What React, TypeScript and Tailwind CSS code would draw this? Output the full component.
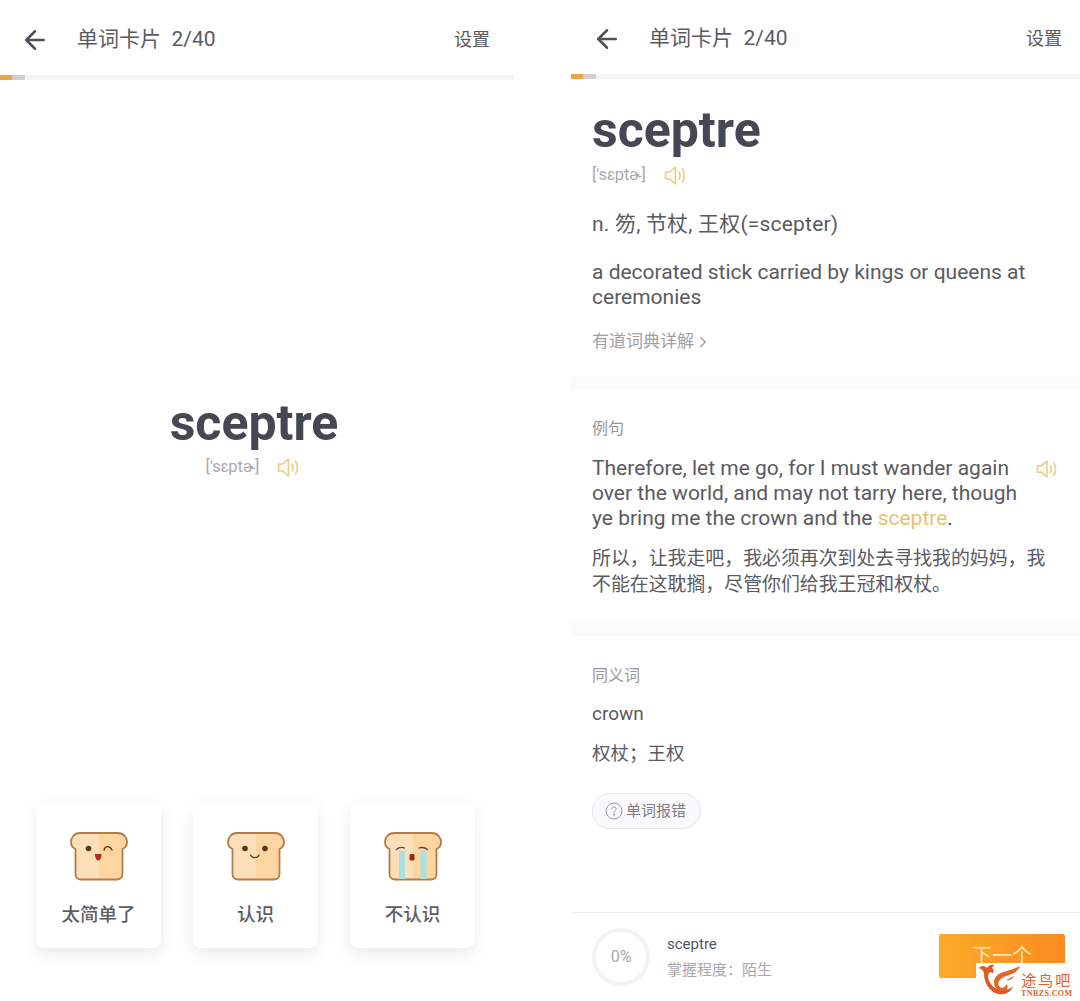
import { ArrowLeft, ChevronRight } from "lucide-react";

const font = "font-['Roboto','Noto_Sans_CJK_SC',sans-serif]";

function Speaker({ className = "" }: { className?: string }) {
  return (
    <svg viewBox="0 0 24 20" fill="none" className={className} stroke="#e9cd8c" strokeWidth="1.600" strokeLinejoin="round" strokeLinecap="round">
      <path d="M1.500 6.500H5.500L11.500 1.500V18.500L5.500 13.500H1.500Z" fill="#fdf9ee" />
      <path d="M15 6.500C16.200 8.500 16.200 11.500 15 13.500" />
      <path d="M18.500 3.500C21 7 21 13 18.500 16.500" />
    </svg>
  );
}

function Bread({ face }: { face: "wink" | "smile" | "cry" }) {
  return (
    <svg viewBox="0 0 58 49" className="h-[49px] w-[58px]" fill="none">
      <defs>
        <linearGradient id={`crust-${face}`} x1="0" x2="1" y1="0" y2="0">
          <stop offset="0.5" stopColor="#fbdfb8" />
          <stop offset="0.5" stopColor="#fcd5a0" />
        </linearGradient>
      </defs>
      <path
        d="M10 1H48C54 1 57 6 57 10C57 14 55 16 52.500 17V42C52.500 45.500 50 47.500 47 47.500H11C8 47.500 5.500 45.500 5.500 42V17C3 16 1 14 1 10C1 6 4 1 10 1Z"
        fill={`url(#crust-${face})`}
        stroke="#b57b48"
        strokeWidth="1.800"
      />
      {face === "wink" && (
        <>
          <circle cx="18.500" cy="16.500" r="2.800" fill="#5b3418" />
          <path d="M34 18C35 13.500 40 13.500 42 18" stroke="#5b3418" strokeWidth="1.300" strokeLinecap="round" />
          <path d="M25 22H31.500C31.500 26 30 28.500 28.200 28.500C26.500 28.500 25 26 25 22Z" fill="#a8301c" />
        </>
      )}
      {face === "smile" && (
        <>
          <circle cx="18" cy="16.500" r="2.800" fill="#5b3418" />
          <circle cx="38" cy="16.500" r="2.800" fill="#5b3418" />
          <path d="M23.500 23C25 26.500 30.500 26.500 32 23" stroke="#5b3418" strokeWidth="1.200" strokeLinecap="round" />
        </>
      )}
      {face === "cry" && (
        <>
          <rect x="15" y="19" width="6" height="28" fill="#a9e0e5" />
          <rect x="36.500" y="19" width="6" height="28" fill="#a9e0e5" />
          <path d="M12.500 17.500C15 15 18 15 20.500 16" stroke="#3f4a55" strokeWidth="1.300" strokeLinecap="round" />
          <path d="M35 16C38 15 41 15.500 43.500 17.500" stroke="#3f4a55" strokeWidth="1.300" strokeLinecap="round" />
          <rect x="25.500" y="22" width="5" height="6.500" rx="1.500" fill="#8a2c14" />
        </>
      )}
    </svg>
  );
}

function Header({ box, arrowPad, titlePad }: { box: string; arrowPad: string; titlePad: string }) {
  return (
    <div className={`flex items-center justify-between text-[#5a5a62] ${box}`}>
      <div className="flex items-center">
        <ArrowLeft className={`size-[30px] text-[#505059] ${arrowPad}`} strokeWidth={2} />
        <span className={`text-[21px] ${titlePad}`}>单词卡片&nbsp;&nbsp;2/40</span>
      </div>
      <span className="text-[18px]">设置</span>
    </div>
  );
}

function Progress() {
  return (
    <div className="flex h-[5px] bg-[#f4f4f6]">
      <div className="w-3 bg-[#eda63f]" />
      <div className="w-[13px] bg-[#cfcfd2]" />
    </div>
  );
}

function Card({ face, label }: { face: "wink" | "smile" | "cry"; label: string }) {
  return (
    <div className="flex h-[146px] w-[125px] flex-col items-center rounded-lg bg-white pt-[30px] shadow-[0_6px_14px_rgba(60,60,90,0.10)]">
      <Bread face={face} />
      <span className="mt-[24px] text-[18.500px] leading-[20px] font-medium text-[#5c5c62]">{label}</span>
    </div>
  );
}

export default function App() {
  return (
    <div className={`relative flex h-[1001px] w-[1080px] overflow-hidden bg-white ${font}`}>
      {/* Left phone */}
      <div className="flex h-full w-[514px] flex-col">
        <Header box="h-[75px] pt-[4px] pr-6" arrowPad="ml-[20px]" titlePad="ml-[27px]" />
        <Progress />
        <div className="mt-[315px] pr-[6px] text-center text-[50px] leading-[56px] font-bold text-[#454754]">sceptre</div>
        <div className="mt-[6px] flex h-5 items-center justify-center gap-[18px] pr-[7px]">
          <span className="text-[16.500px] text-[#a8a8ac]">['sɛptɚ]</span>
          <Speaker className="h-[21px] w-[24px]" />
        </div>
        <div className="mt-auto mb-[53px] flex gap-[32px] pl-[36px]">
          <Card face="wink" label="太简单了" />
          <Card face="smile" label="认识" />
          <Card face="cry" label="不认识" />
        </div>
      </div>

      {/* Right phone */}
      <div className="ml-[57px] flex h-full w-[509px] flex-col">
        <Header box="h-[74px] pt-[3px] pr-[18px]" arrowPad="ml-[21px]" titlePad="ml-[27px]" />
        <Progress />
        <div className="flex flex-col px-[21px]">
          <div className="mt-[23px] text-[50px] leading-[56px] font-bold text-[#454754]">sceptre</div>
          <div className="mt-[7px] flex h-5 items-center gap-[18px]">
            <span className="text-[16.500px] text-[#a8a8ac]">['sɛptɚ]</span>
            <Speaker className="h-[21px] w-[24px]" />
          </div>
          <div className="mt-[27px] text-[21px] leading-[24px] tracking-[0.2px] text-[#5a5a60]">n. 笏, 节杖, 王权(=scepter)</div>
          <div className="mt-[24px] text-[21px] leading-[25px] text-[#5a5a60]">
            a decorated stick carried by kings or queens at
            <br />
            ceremonies
          </div>
          <div className="mt-[22px] flex h-5 items-center text-[17px] text-[#a0a0a4]">
            有道词典详解
            <ChevronRight className="size-[18px]" strokeWidth={1.800} />
          </div>
        </div>
        <div className="mt-[24px] h-[14px] shrink-0 bg-[#fbfbfc]" />
        <div className="flex flex-col px-[21px]">
          <div className="mt-[29px] text-[16px] leading-[20px] text-[#98989c]">例句</div>
          <div className="mt-[17px] flex items-start justify-between text-[21px] leading-[25px] text-[#5a5a60]">
            <div className="whitespace-nowrap">
              Therefore, let me go, for I must wander again
              <br />
              over the world, and may not tarry here, though
              <br />
              ye bring me the crown and the <span className="text-[#e8c272]">sceptre</span>.
            </div>
            <Speaker className="mt-[3px] h-[20px] w-[23px] shrink-0" />
          </div>
          <div className="mt-[15px] text-[18.900px] leading-[26px] text-[#5a5a60]">
            所以，让我走吧，我必须再次到处去寻找我的妈妈，我
            <br />
            不能在这耽搁，尽管你们给我王冠和权杖。
          </div>
        </div>
        <div className="mt-[24px] h-[14px] shrink-0 bg-[#fbfbfc]" />
        <div className="flex flex-col items-start px-[21px]">
          <div className="mt-[30px] text-[16px] leading-[20px] text-[#98989c]">同义词</div>
          <div className="mt-[16px] text-[19px] leading-[24px] text-[#5a5a60]">crown</div>
          <div className="mt-[16px] text-[18.500px] leading-[24px] text-[#5a5a60]">权杖；王权</div>
          <div className="mt-[27px] flex h-[36px] w-[109px] items-center gap-[3px] rounded-full border border-[#e6e6ea] bg-[#f9f9fb] pl-[12px] text-[15px] text-[#7c7c82]">
            <svg viewBox="0 0 18 18" className="size-[18px]" fill="none" stroke="#9a9aa0" strokeWidth="1">
              <circle cx="9" cy="9" r="8" />
              <path d="M6.800 7C6.800 5.700 7.800 5 9 5C10.300 5 11.200 5.800 11.200 6.900C11.200 8.400 9 8.500 9 10.400" strokeLinecap="round" />
              <circle cx="9" cy="12.800" r="0.600" fill="#9a9aa0" />
            </svg>
            单词报错
          </div>
        </div>
        <div className="mt-auto flex h-[89px] items-center border-t border-[#eeeef0] pr-[15px] pl-[21px]">
          <div className="flex size-[58px] items-center justify-center rounded-full border-[4px] border-[#f3f2f5] text-[16px] text-[#a8a8ac]">
            0%
          </div>
          <div className="ml-[17px] flex flex-col">
            <span className="text-[15px] leading-[20px] text-[#55555b]">sceptre</span>
            <span className="mt-[6px] text-[15px] leading-[20px] text-[#a8a8ac]">掌握程度：陌生</span>
          </div>
          <div className="mt-[-2px] ml-auto flex h-[44px] w-[126px] items-center justify-center rounded-[2px] bg-gradient-to-r from-[#fcaa2a] to-[#fb8a20] text-[20px] text-[#fde3b0]">
            下一个
          </div>
        </div>
      </div>

      {/* Watermark over the corner */}
      <div className="absolute right-0 bottom-0 flex h-[38px] w-[104px] items-start bg-white">
        <svg viewBox="0 0 44 34" className="h-[34px] w-[44px]" fill="none">
          <path d="M3 5C6 2 9 3 11 5C12 3 15 1 18 2L16 5C18 6 18 8 17 10C14 8 12 10 12 14C13 21 19 27 27 27C31 27 34 26 37 23C35 30 28 32 22 31C14 29 8 20 8 11C8 8 6 6 3 5Z" fill="#dd5a24" />
          <path d="M44 3C41 11 33 12 28 14C23 16 21 20 23 23C25 26 30 25 30 21C33 23 32 28 27 28C20 28 16 21 19 15C23 8 34 9 44 3Z" fill="#e2662a" />
          <path d="M38 13C36 17 33 18 30 17C32 16 35 15 38 13Z" fill="#e2662a" />
        </svg>
        <div className="mt-[10px] ml-[1px] flex flex-col items-center">
          <span className="text-[15px] leading-[16px] tracking-[2px] text-[#e0602c]">途鸟吧</span>
          <span className="font-['Liberation_Serif',serif] text-[8px] leading-[9px] font-bold tracking-[0.4px] text-[#e0602c]">TNBZS.COM</span>
        </div>
      </div>
    </div>
  );
}
